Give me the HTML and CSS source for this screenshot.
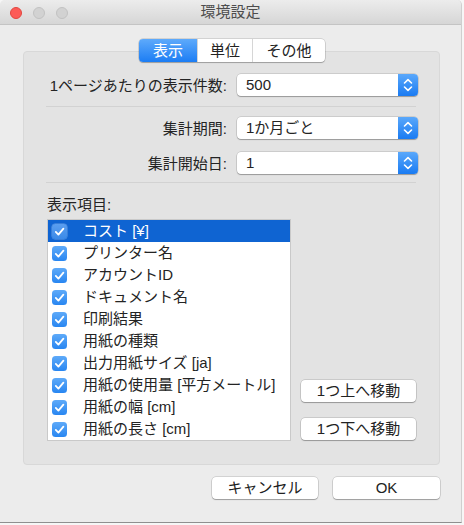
FILE: index.html
```html
<!DOCTYPE html>
<html lang="ja">
<head>
<meta charset="utf-8">
<title>環境設定</title>
<link rel="stylesheet" href="styles.css">
</head>
<body>
<div class="window">
  <div class="titlebar">
    <div class="lights">
      <span class="light red"></span>
      <span class="light gray"></span>
      <span class="light gray"></span>
    </div>
    <div class="title">環境設定</div>
    <div></div>
  </div>

  <div class="tabs">
    <div class="tab active t1">表示</div>
    <div class="tab t2">単位</div>
    <div class="tab t3">その他</div>
  </div>

  <div class="box">
    <div class="row r1">
      <div class="label">1ページあたりの表示件数:</div>
      <div class="popup"><span class="pv">500</span><span class="stepper"><svg width="20" height="22" viewBox="0 0 20 22"><path d="M6.5 9 L10 5.6 L13.5 9" fill="none" stroke="#fff" stroke-width="1.6" stroke-linecap="round" stroke-linejoin="round"/><path d="M6.5 13 L10 16.4 L13.5 13" fill="none" stroke="#fff" stroke-width="1.6" stroke-linecap="round" stroke-linejoin="round"/></svg></span></div>
    </div>
    <div class="sep s1"></div>
    <div class="row r2">
      <div class="label">集計期間:</div>
      <div class="popup"><span class="pv">1か月ごと</span><span class="stepper"><svg width="20" height="22" viewBox="0 0 20 22"><path d="M6.5 9 L10 5.6 L13.5 9" fill="none" stroke="#fff" stroke-width="1.6" stroke-linecap="round" stroke-linejoin="round"/><path d="M6.5 13 L10 16.4 L13.5 13" fill="none" stroke="#fff" stroke-width="1.6" stroke-linecap="round" stroke-linejoin="round"/></svg></span></div>
    </div>
    <div class="row r3">
      <div class="label">集計開始日:</div>
      <div class="popup"><span class="pv">1</span><span class="stepper"><svg width="20" height="22" viewBox="0 0 20 22"><path d="M6.5 9 L10 5.6 L13.5 9" fill="none" stroke="#fff" stroke-width="1.6" stroke-linecap="round" stroke-linejoin="round"/><path d="M6.5 13 L10 16.4 L13.5 13" fill="none" stroke="#fff" stroke-width="1.6" stroke-linecap="round" stroke-linejoin="round"/></svg></span></div>
    </div>
    <div class="sep s2"></div>

    <div class="list-label">表示項目:</div>
    <div class="list-area">
      <div class="list">
        <div class="item selected"><span class="cb"><svg width="15" height="15" viewBox="0 0 15 15"><path d="M3.8 7.9 L6.4 10.6 L11.4 4.6" fill="none" stroke="#fff" stroke-width="1.8" stroke-linecap="round" stroke-linejoin="round"/></svg></span><span class="txt">コスト [¥]</span></div>
        <div class="item"><span class="cb"><svg width="15" height="15" viewBox="0 0 15 15"><path d="M3.8 7.9 L6.4 10.6 L11.4 4.6" fill="none" stroke="#fff" stroke-width="1.8" stroke-linecap="round" stroke-linejoin="round"/></svg></span><span class="txt">プリンター名</span></div>
        <div class="item"><span class="cb"><svg width="15" height="15" viewBox="0 0 15 15"><path d="M3.8 7.9 L6.4 10.6 L11.4 4.6" fill="none" stroke="#fff" stroke-width="1.8" stroke-linecap="round" stroke-linejoin="round"/></svg></span><span class="txt">アカウントID</span></div>
        <div class="item"><span class="cb"><svg width="15" height="15" viewBox="0 0 15 15"><path d="M3.8 7.9 L6.4 10.6 L11.4 4.6" fill="none" stroke="#fff" stroke-width="1.8" stroke-linecap="round" stroke-linejoin="round"/></svg></span><span class="txt">ドキュメント名</span></div>
        <div class="item"><span class="cb"><svg width="15" height="15" viewBox="0 0 15 15"><path d="M3.8 7.9 L6.4 10.6 L11.4 4.6" fill="none" stroke="#fff" stroke-width="1.8" stroke-linecap="round" stroke-linejoin="round"/></svg></span><span class="txt">印刷結果</span></div>
        <div class="item"><span class="cb"><svg width="15" height="15" viewBox="0 0 15 15"><path d="M3.8 7.9 L6.4 10.6 L11.4 4.6" fill="none" stroke="#fff" stroke-width="1.8" stroke-linecap="round" stroke-linejoin="round"/></svg></span><span class="txt">用紙の種類</span></div>
        <div class="item"><span class="cb"><svg width="15" height="15" viewBox="0 0 15 15"><path d="M3.8 7.9 L6.4 10.6 L11.4 4.6" fill="none" stroke="#fff" stroke-width="1.8" stroke-linecap="round" stroke-linejoin="round"/></svg></span><span class="txt">出力用紙サイズ [ja]</span></div>
        <div class="item"><span class="cb"><svg width="15" height="15" viewBox="0 0 15 15"><path d="M3.8 7.9 L6.4 10.6 L11.4 4.6" fill="none" stroke="#fff" stroke-width="1.8" stroke-linecap="round" stroke-linejoin="round"/></svg></span><span class="txt">用紙の使用量 [平方メートル]</span></div>
        <div class="item"><span class="cb"><svg width="15" height="15" viewBox="0 0 15 15"><path d="M3.8 7.9 L6.4 10.6 L11.4 4.6" fill="none" stroke="#fff" stroke-width="1.8" stroke-linecap="round" stroke-linejoin="round"/></svg></span><span class="txt">用紙の幅 [cm]</span></div>
        <div class="item"><span class="cb"><svg width="15" height="15" viewBox="0 0 15 15"><path d="M3.8 7.9 L6.4 10.6 L11.4 4.6" fill="none" stroke="#fff" stroke-width="1.8" stroke-linecap="round" stroke-linejoin="round"/></svg></span><span class="txt">用紙の長さ [cm]</span></div>
      </div>
      <div class="move-buttons">
        <div class="btn move">1つ上へ移動</div>
        <div class="btn move">1つ下へ移動</div>
      </div>
    </div>
  </div>

  <div class="footer">
    <div class="btn cancel">キャンセル</div>
    <div class="btn ok">OK</div>
  </div>
</div>
</body>
</html>
```

FILE: styles.css
```css
html, body {
  margin: 0;
  padding: 0;
  background: #f6f6f6;
}

body {
  font-family: "Liberation Sans", "Noto Sans CJK JP", sans-serif;
  font-size: 15px;
  color: #242424;
}

.window {
  width: 461px;
  height: 522px;
  background: #ececec;
  border-right: 1px solid #cfcfcf;
  border-bottom: 1px solid #8f8f8f;
  border-radius: 5px 5px 0 0;
  overflow: hidden;
  display: flex;
  flex-direction: column;
}

.titlebar {
  height: 24px;
  border-bottom: 1px solid #c4c4c4;
  background: linear-gradient(#ececec, #d6d6d6);
  display: grid;
  grid-template-columns: 1fr auto 1fr;
  align-items: center;
}

.lights {
  display: flex;
  gap: 11px;
  padding-left: 10px;
  padding-top: 1px;
}

.light {
  width: 12px;
  height: 12px;
  border-radius: 50%;
  box-sizing: border-box;
}

.light.red {
  background: #fc5b57;
  border: 1px solid #e2463f;
}

.light.gray {
  background: #d2d2d2;
  border: 1px solid #c2c2c2;
}

.title {
  font-size: 15px;
  color: #4d4d4d;
  line-height: 18px;
}

.tabs {
  align-self: center;
  margin-top: 14px;
  margin-bottom: -11px;
  margin-left: 3px;
  display: flex;
  height: 23px;
  background: #fff;
  border-radius: 4px;
  box-shadow: 0 0 0 0.5px rgba(0, 0, 0, 0.22), 0 1px 1px rgba(0, 0, 0, 0.22);
  position: relative;
  z-index: 1;
}

.tab {
  display: flex;
  align-items: center;
  justify-content: center;
  line-height: 18px;
  color: #222;
  border-left: 1px solid #d6d6d6;
}

.tab.t1 { width: 58px; border-left: none; }
.tab.t2 { width: 54px; }
.tab.t3 { width: 72px; }

.tab.active {
  color: #fff;
  background: linear-gradient(#5eaafb, #1c7df4);
  border-radius: 4px 0 0 4px;
}

.box {
  margin-left: 23px;
  margin-right: 21px;
  background: #e3e3e3;
  border: 1px solid #d8d8d8;
  border-radius: 4px;
  padding: 22px 0 23px 0;
  display: flex;
  flex-direction: column;
}

.row {
  display: flex;
  align-items: center;
  height: 23px;
}

.r2 { margin-top: 10px; }
.r3 { margin-top: 12px; }

.label {
  width: 203px;
  text-align: right;
  margin-right: 10px;
  line-height: 18px;
  white-space: nowrap;
}

.popup {
  width: 181px;
  height: 22px;
  background: #fff;
  border-radius: 4px;
  box-shadow: 0 0 0 0.5px rgba(0, 0, 0, 0.2), 0 1px 1px rgba(0, 0, 0, 0.25);
  display: flex;
  align-items: center;
  margin-top: -1px;
}

.pv {
  flex: 1;
  padding-left: 9px;
  line-height: 18px;
}

.stepper {
  width: 20px;
  height: 22px;
  background: linear-gradient(#5aa8fb, #1a7bf2);
  border-radius: 0 4px 4px 0;
  display: flex;
}

.sep {
  height: 1px;
  background: #d2d2d2;
  margin-left: 22px;
  margin-right: 23px;
}

.s1 { margin-top: 9px; }
.s2 { margin-top: 7px; }

.list-label {
  margin-top: 13px;
  margin-left: 23px;
  line-height: 18px;
}

.list-area {
  margin-top: 5px;
  margin-left: 23px;
  margin-right: 23px;
  display: flex;
  align-items: flex-end;
  justify-content: space-between;
}

.list {
  width: 242px;
  background: #fff;
  border: 1px solid #c9c9c9;
  display: flex;
  flex-direction: column;
}

.item {
  height: 22px;
  display: flex;
  align-items: center;
  padding-left: 4px;
  white-space: nowrap;
}

.item.selected {
  background: #0f64d2;
  color: #fff;
}

.cb {
  width: 15px;
  height: 15px;
  border-radius: 3.5px;
  background: linear-gradient(#5eaaf9, #2886f1);
  display: flex;
  margin-right: 16px;
}

.item.selected .cb {
  background: linear-gradient(#5a9ef0, #3b8ae8);
  box-shadow: 0 0 0 0.5px rgba(255, 255, 255, 0.35);
}

.txt {
  line-height: 18px;
}

.move-buttons {
  display: flex;
  flex-direction: column;
  gap: 16px;
  margin-bottom: 1px;
}

.btn {
  height: 22px;
  background: #fff;
  border-radius: 4px;
  box-shadow: 0 0 0 0.5px rgba(0, 0, 0, 0.22), 0 1px 1px rgba(0, 0, 0, 0.25);
  display: flex;
  align-items: center;
  justify-content: center;
  line-height: 18px;
  color: #222;
}

.btn.move { width: 115px; }

.footer {
  margin-top: 12px;
  margin-right: 21px;
  display: flex;
  justify-content: flex-end;
  gap: 15px;
}

.btn.cancel { width: 106px; }
.btn.ok { width: 107px; }
```
